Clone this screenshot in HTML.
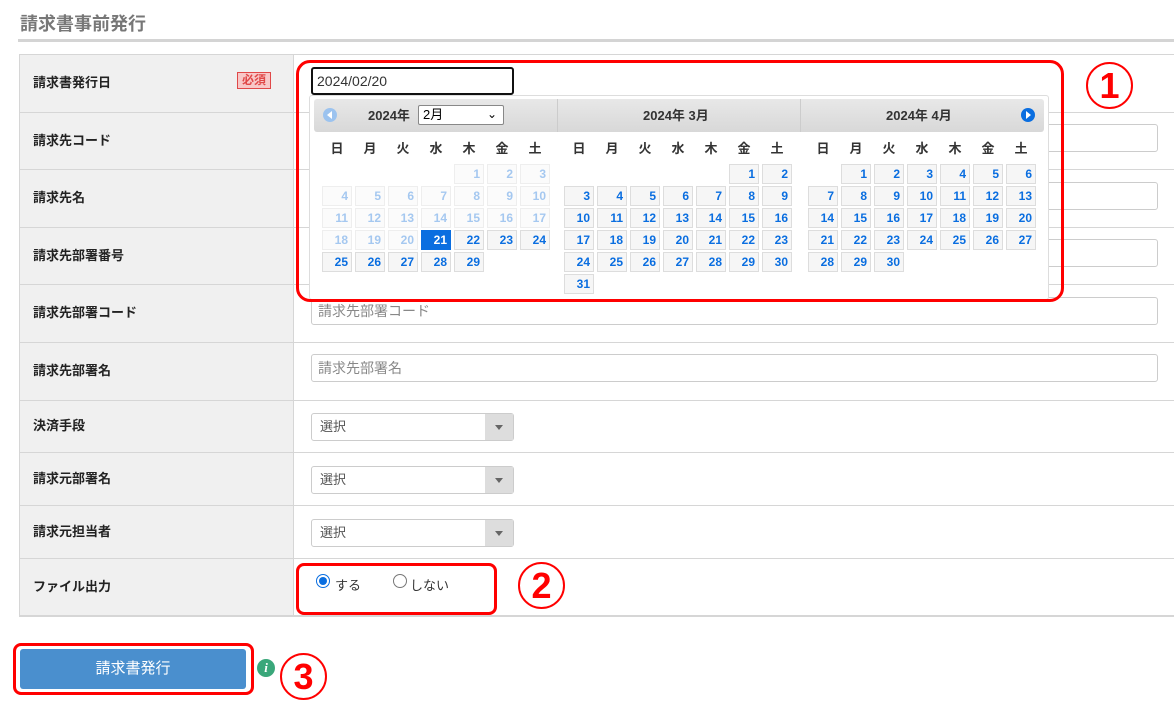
<!DOCTYPE html>
<html><head><meta charset="utf-8"><style>
*{box-sizing:border-box;margin:0;padding:0}
body{width:1174px;height:706px;background:#fff;font-family:"Liberation Sans","Noto Sans CJK JP",sans-serif;position:relative;overflow:hidden;color:#333}
.a{position:absolute}
.title{left:20px;top:10px;font-size:18px;font-weight:bold;color:#777}
.rule{left:18px;top:39px;width:1156px;height:3px;background:#d4d4d4}
.lab{left:19px;width:274px;background:#f0f0f0;border-top:1px solid #d6d6d6;font-size:13px;font-weight:bold;color:#222;padding-left:14px;padding-bottom:4px;display:flex;align-items:center}
.val{left:293px;width:881px;border-top:1px solid #d6d6d6;border-left:1px solid #d6d6d6}
.inp{left:311px;width:847px;height:28px;border:1px solid #ccc;border-radius:3px;background:#fff;font-size:14px;color:#888;padding-left:6px;line-height:26px}
.sel{left:311px;width:203px;height:28px;border:1px solid #ccc;border-radius:3px;background:#fff;font-size:13px;color:#555;padding-left:8px;line-height:26px}
.sel i{position:absolute;right:0;top:0;width:28px;height:26px;background:#ddd}
.sel i:after{content:"";position:absolute;left:10px;top:11px;border-left:4px solid transparent;border-right:4px solid transparent;border-top:5px solid #666}
.red{border:3px solid #f00;border-radius:8px}
.num{color:#f00;font-weight:bold;border:2px solid #f00;border-radius:50%;text-align:center;font-family:"Liberation Sans",sans-serif}
.c{position:absolute;width:30px;height:20px;background:#f6f6f6;border:1px solid #ddd;font-size:12px;font-weight:bold;color:#0a6ee0;text-align:right;padding-right:3px;line-height:18px}
.c.d{color:#a5c8f0;background:#fbfbfb;border-color:#eee}
.c.s{background:#0a6ee0;color:#fff;border-color:#0a6ee0}
.dn{position:absolute;width:30px;text-align:center;font-size:13px;font-weight:bold;color:#333;top:138px}
</style></head><body>
<div class="a title">請求書事前発行</div>
<div class="a rule"></div>

<div class="a lab" style="top:54px;height:58px;border-top:1px solid #d6d6d6">請求書発行日<span style="position:absolute;left:218px;top:17px;font-size:12px;color:#e04848;background:#f8c8c8;border:1px solid #e04848;padding:0 4px;line-height:15px">必須</span></div>
<div class="a lab" style="top:112px;height:57px">請求先コード</div>
<div class="a lab" style="top:169px;height:58px">請求先名</div>
<div class="a lab" style="top:227px;height:57px">請求先部署番号</div>
<div class="a lab" style="top:284px;height:58px">請求先部署コード</div>
<div class="a lab" style="top:342px;height:58px">請求先部署名</div>
<div class="a lab" style="top:400px;height:52px">決済手段</div>
<div class="a lab" style="top:452px;height:53px">請求元部署名</div>
<div class="a lab" style="top:505px;height:53px">請求元担当者</div>
<div class="a lab" style="top:558px;height:59px;border-bottom:2px solid #d6d6d6">ファイル出力</div>
<div class="a" style="left:19px;top:54px;width:1px;height:563px;background:#d6d6d6"></div>
<div class="a val" style="top:54px;height:58px"></div>
<div class="a val" style="top:112px;height:57px"></div>
<div class="a val" style="top:169px;height:58px"></div>
<div class="a val" style="top:227px;height:57px"></div>
<div class="a val" style="top:284px;height:58px"></div>
<div class="a val" style="top:342px;height:58px"></div>
<div class="a val" style="top:400px;height:52px"></div>
<div class="a val" style="top:452px;height:53px"></div>
<div class="a val" style="top:505px;height:53px"></div>
<div class="a val" style="top:558px;height:59px;border-bottom:2px solid #d6d6d6"></div>

<div class="a inp" style="top:124px"></div>
<div class="a inp" style="top:182px"></div>
<div class="a inp" style="top:239px"></div>
<div class="a inp" style="top:297px">請求先部署コード</div>
<div class="a inp" style="top:354px">請求先部署名</div>
<div class="a sel" style="top:413px">選択<i></i></div>
<div class="a sel" style="top:466px">選択<i></i></div>
<div class="a sel" style="top:519px">選択<i></i></div>

<!-- calendar -->
<div class="a" style="left:309px;top:95px;width:740px;height:205px;background:#fff;border:1px solid #ddd;border-radius:3px"></div>
<div class="a" style="left:314px;top:99px;width:730px;height:33px;background:linear-gradient(#e8e8e8,#d8d8d8);border-radius:3px"></div>
<div class="a" style="left:557px;top:99px;width:1px;height:33px;background:#ccc"></div>
<div class="a" style="left:800px;top:99px;width:1px;height:33px;background:#ccc"></div>
<div class="a" style="left:323px;top:108px;width:14px;height:14px;border-radius:50%;background:#9cc3ef"></div>
<div class="a" style="left:327px;top:111px;border-top:4px solid transparent;border-bottom:4px solid transparent;border-right:5px solid #fff"></div>
<div class="a" style="left:1021px;top:108px;width:14px;height:14px;border-radius:50%;background:#0a6ee0"></div>
<div class="a" style="left:1026px;top:111px;border-top:4px solid transparent;border-bottom:4px solid transparent;border-left:5px solid #fff"></div>
<div class="a" style="left:368px;top:105px;font-size:13px;font-weight:bold;color:#333">2024年</div>
<div class="a" style="left:418px;top:105px;width:86px;height:20px;border:1px solid #888;border-radius:2px;background:#fff;font-size:13px;line-height:18px;padding-left:4px;color:#000">2月<span style="position:absolute;right:6px;top:-1px;font-size:12px">&#8964;</span></div>
<div class="a" style="left:643px;top:105px;font-size:13px;font-weight:bold;color:#333">2024年 3月</div>
<div class="a" style="left:886px;top:105px;font-size:13px;font-weight:bold;color:#333">2024年 4月</div>
<div id="cal"></div>

<div class="a" style="left:311px;top:67px;width:203px;height:28px;border:2px solid #111;border-radius:3px;background:#fff;font-size:14px;color:#333;padding-left:4px;line-height:24px">2024/02/20</div>

<div class="a red" style="left:296px;top:60px;width:768px;height:242px;border-radius:14px"></div>
<div class="a num" style="left:1086px;top:62px;width:47px;height:47px;font-size:36px;line-height:43px">1</div>

<!-- radios -->
<div class="a" style="left:316px;top:574px;width:14px;height:14px;border-radius:50%;border:1px solid #0a6ee0;background:#fff"></div>
<div class="a" style="left:319px;top:577px;width:8px;height:8px;border-radius:50%;background:#0a6ee0"></div>
<div class="a" style="left:335px;top:575px;font-size:13px;color:#333">する</div>
<div class="a" style="left:393px;top:574px;width:14px;height:14px;border-radius:50%;border:1px solid #777;background:#fff"></div>
<div class="a" style="left:410px;top:575px;font-size:13px;color:#333">しない</div>
<div class="a red" style="left:296px;top:563px;width:201px;height:52px"></div>
<div class="a num" style="left:518px;top:562px;width:47px;height:47px;font-size:36px;line-height:43px">2</div>

<!-- button -->
<div class="a" style="left:20px;top:649px;width:226px;height:40px;background:#4a8fce;border-radius:3px;color:#fff;font-size:15px;text-align:center;line-height:40px">請求書発行</div>
<div class="a red" style="left:13px;top:643px;width:241px;height:52px"></div>
<div class="a" style="left:257px;top:659px;width:18px;height:18px;border-radius:50%;background:#3aa77a;color:#fff;font-size:13px;font-weight:bold;font-style:italic;text-align:center;line-height:18px;font-family:'Liberation Serif',serif">i</div>
<div class="a num" style="left:280px;top:653px;width:47px;height:47px;font-size:36px;line-height:43px">3</div>

<script>
var h='',names=['日','月','火','水','木','金','土'],bases=[322,564,808];
var months=[[4,29],[5,31],[1,30]];
for(var m=0;m<3;m++){
 for(var i=0;i<7;i++)h+='<div class="dn" style="left:'+(bases[m]+i*33)+'px">'+names[i]+'</div>';
 var st=months[m][0],n=months[m][1];
 for(var d=1;d<=n;d++){var p=st+d-1,r=Math.floor(p/7),c=p%7;
  var cls='c';if(m==0&&d<21)cls+=' d';if(m==0&&d==21)cls+=' s';
  h+='<div class="'+cls+'" style="left:'+(bases[m]+c*33)+'px;top:'+(164+r*22)+'px">'+d+'</div>';}
}
document.getElementById('cal').innerHTML=h;
</script>
</body></html>
